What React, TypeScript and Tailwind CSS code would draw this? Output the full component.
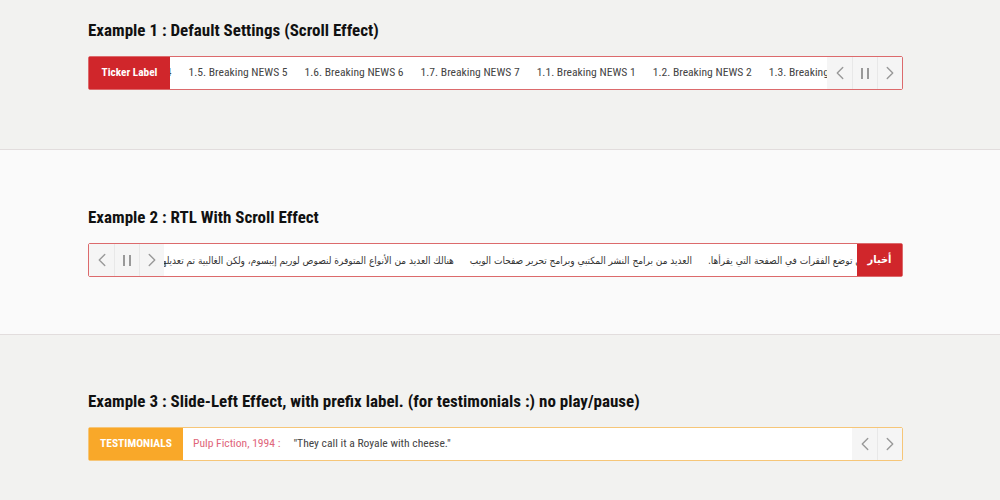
import { ChevronLeft, ChevronRight } from "lucide-react";

const condensed = {
  fontFamily: '"Roboto Condensed", "Liberation Sans Narrow", "Arial Narrow", Roboto, sans-serif',
};

const arabic = {
  fontFamily: '"DejaVu Sans Condensed", "DejaVu Sans", sans-serif',
};

const newsItems = [
  "1.4. Breaking NEWS 4",
  "1.5. Breaking NEWS 5",
  "1.6. Breaking NEWS 6",
  "1.7. Breaking NEWS 7",
  "1.1. Breaking NEWS 1",
  "1.2. Breaking NEWS 2",
  "1.3. Breaking NEWS 3",
];

const arabicItems = [
  "هناك حقيقة مثبتة منذ زمن طويل وهي أن المحتوى المقروء لصفحة ما سيلهي القارئ عن التركيز على الشكل الخارجي للنص أو شكل توضع الفقرات في الصفحة التي يقرأها.",
  "العديد من برامج النشر المكتبي وبرامج تحرير صفحات الويب",
  "هنالك العديد من الأنواع المتوفرة لنصوص لوريم إيبسوم، ولكن الغالبية تم تعديلها بشكل ما عبر إدخال بعض النوادر",
];

function CtrlButton({ children }: { children: React.ReactNode }) {
  return (
    <button className="w-[25px] h-full flex items-center justify-center bg-[#f5f5f5] border-l border-[#e8e8e8] first:border-l-0 text-[#999]">
      {children}
    </button>
  );
}

function PauseIcon() {
  return (
    <span className="flex gap-[4px] h-[11px]">
      <span className="w-[2px] h-full bg-[#999]" />
      <span className="w-[2px] h-full bg-[#999]" />
    </span>
  );
}

function Heading({ children }: { children: React.ReactNode }) {
  return (
    <h2 className="text-[17px] leading-[22px] font-bold text-[#111]" style={condensed}>
      {children}
    </h2>
  );
}

export default function App() {
  return (
    <div className="w-[1000px] h-[500px] overflow-hidden bg-[#f2f2f0]">
      {/* ── Example 1 ── */}
      <section className="h-[149px] pt-[19px] pl-[88px] bg-[#f2f2f0]">
        <Heading>Example 1 : Default Settings (Scroll Effect)</Heading>
        <div className="mt-[15px] w-[815px] h-[34px] flex border border-[#dc6a6c] bg-white rounded-[2px]" style={condensed}>
          <div className="w-[81px] shrink-0 flex items-center justify-center bg-[#d0262b] text-white text-[11.3px] font-bold">
            Ticker Label
          </div>
          <div className="flex-1 overflow-hidden flex items-center">
            <div className="flex items-center whitespace-nowrap -translate-x-[106px] text-[11.6px] text-[#444]">
              {newsItems.map((item) => (
                <span key={item} className="px-[8.5px]">
                  {item}
                </span>
              ))}
            </div>
          </div>
          <div className="flex shrink-0 h-full">
            <CtrlButton><ChevronLeft size={22} strokeWidth={1.5} /></CtrlButton>
            <CtrlButton><PauseIcon /></CtrlButton>
            <CtrlButton><ChevronRight size={22} strokeWidth={1.5} /></CtrlButton>
          </div>
        </div>
      </section>

      {/* ── Example 2 : RTL ── */}
      <section className="h-[186px] pt-[56px] pl-[88px] bg-[#fafafa] border-y border-[#e2dddd]">
        <Heading>Example 2 : RTL With Scroll Effect</Heading>
        <div dir="rtl" className="mt-[15px] w-[815px] h-[34px] flex border border-[#dc6a6c] bg-white rounded-[2px]">
          <div className="w-[45px] shrink-0 flex items-center justify-center bg-[#d0262b] text-white text-[11px] font-bold" style={arabic}>
            أخبار
          </div>
          <div className="flex-1 overflow-hidden flex items-center">
            <div className="flex items-center whitespace-nowrap translate-x-[495px] text-[10px] text-[#333]" style={arabic}>
              {arabicItems.map((item) => (
                <span key={item} className="px-[8px]">
                  {item}
                </span>
              ))}
            </div>
          </div>
          <div dir="ltr" className="flex shrink-0 h-full">
            <CtrlButton><ChevronLeft size={22} strokeWidth={1.5} /></CtrlButton>
            <CtrlButton><PauseIcon /></CtrlButton>
            <CtrlButton><ChevronRight size={22} strokeWidth={1.5} /></CtrlButton>
          </div>
        </div>
      </section>

      {/* ── Example 3 : slide-left with prefix ── */}
      <section className="pt-[55px] pl-[88px] bg-[#f2f2f0]">
        <Heading>Example 3 : Slide-Left Effect, with prefix label. (for testimonials :) no play/pause)</Heading>
        <div className="mt-[15px] w-[815px] h-[34px] flex border border-[#f6c678] bg-white rounded-[2px]" style={condensed}>
          <div className="w-[94px] shrink-0 flex items-center justify-center bg-[#f9a829] text-white text-[11.5px] font-bold">
            TESTIMONIALS
          </div>
          <div className="flex-1 overflow-hidden flex items-center pl-[10px] text-[11.6px] whitespace-nowrap">
            <span className="text-[#e0657a]">Pulp Fiction, 1994 :</span>
            <span className="ml-[13px] text-[#444]">"They call it a Royale with cheese."</span>
          </div>
          <div className="flex shrink-0 h-full">
            <CtrlButton><ChevronLeft size={22} strokeWidth={1.5} /></CtrlButton>
            <CtrlButton><ChevronRight size={22} strokeWidth={1.5} /></CtrlButton>
          </div>
        </div>
      </section>
    </div>
  );
}
